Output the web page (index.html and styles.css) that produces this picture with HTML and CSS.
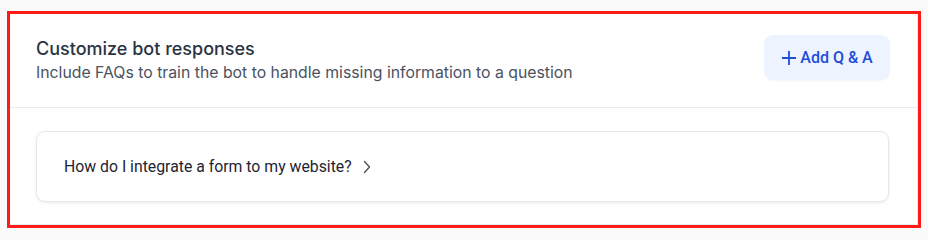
FILE: index.html
```html
<!DOCTYPE html>
<html>
<head>
<meta charset="utf-8">
<link rel="stylesheet" href="styles.css">
</head>
<body>
<div class="frame">
  <section class="panel">
    <header class="panel-head">
      <div class="head-text">
        <h2 class="title">Customize bot responses</h2>
        <p class="subtitle">Include FAQs to train the bot to handle missing information to a question</p>
      </div>
      <button class="add-btn">
        <svg class="plus" width="16" height="16" viewBox="0 0 16 16"><path d="M8 1v14M1 8h14" stroke="currentColor" stroke-width="1.8" fill="none"/></svg>
        <span>Add Q &amp; A</span>
      </button>
    </header>
    <div class="panel-body">
      <div class="qa-card">
        <span class="question">How do I integrate a form to my website?</span>
        <svg class="chev" width="8" height="14" viewBox="0 0 8 14"><path d="M1.5 1.5l5 5.5-5 5.5" stroke="#4b5563" stroke-width="1.4" fill="none" stroke-linecap="round" stroke-linejoin="round"/></svg>
      </div>
    </div>
  </section>
</div>
</body>
</html>
```
FILE: styles.css
```css
* { box-sizing: border-box; }
html, body { margin: 0; padding: 0; }
body {
  background: #fafafa;
  padding: 11px 7px 0 7px;
  font-family: Inter, "Noto Sans", sans-serif;
}
.frame {
  width: 914px;
  height: 217px;
  border: 3px solid #ff1a1a;
}
.panel {
  background: #fff;
  border: 1px solid #e8eaee;
  height: 100%;
  border-top: none;
  border-left: none;
}
.panel-head {
  display: flex;
  justify-content: space-between;
  align-items: flex-start;
  padding: 21px 27px 0 26px;
  height: 94px;
  border-bottom: 1px solid #e9ebef;
}
.head-text { padding-top: 2px; }
.title {
  margin: 0;
  font-size: 18px;
  font-weight: 500;
  color: #2a3342;
  line-height: 24px;
}
.subtitle {
  margin: 0;
  font-size: 15.8px;
  font-weight: 400;
  color: #4a5261;
  line-height: 24px;
}
.add-btn {
  height: 45px;
  width: 126px;
  border: none;
  border-radius: 9px;
  background: #edf3ff;
  color: #1d4ed8;
  display: flex;
  align-items: center;
  justify-content: center;
  gap: 3px;
  font-family: Roboto, sans-serif;
  font-weight: 500;
  font-size: 16px;
  padding: 0;
  box-shadow: 0 1px 2px rgba(0,0,0,0.04);
}
.plus { display: block; }
.panel-body {
  padding: 23px 28px 0 26px;
}
.qa-card {
  height: 71px;
  border: 1px solid #e6e8ec;
  border-radius: 9px;
  box-shadow: 0 1px 3px rgba(0,0,0,0.08);
  display: flex;
  align-items: center;
  padding-left: 27px;
  gap: 11px;
  background: #fff;
}
.question {
  font-family: Roboto, sans-serif;
  font-size: 15.8px;
  color: #1e2433;
}
.chev { display: block; margin-top: 1px; }
```
